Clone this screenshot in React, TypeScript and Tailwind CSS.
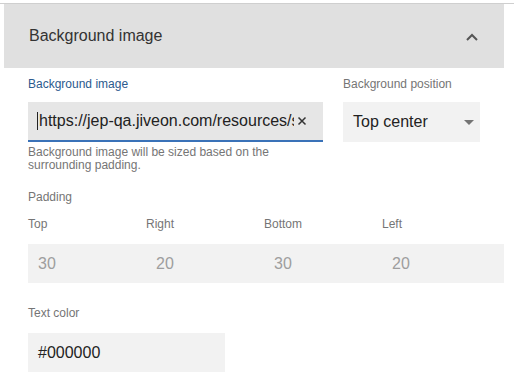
const paddingFields = [
  { label: "Top", value: "30" },
  { label: "Right", value: "20" },
  { label: "Bottom", value: "30" },
  { label: "Left", value: "20" },
]

export default function App() {
  return (
    <div className="w-[514px] h-[386px] bg-white overflow-hidden font-['Liberation_Sans',Arial,sans-serif]">
      <div className="h-[3px]" />
      <div className="h-px bg-[#cfcfcf]" />
      <div className="pl-[4px] pr-[10px]">
        {/* accordion header */}
        <div className="h-[64px] bg-[#e0e0e0] flex items-center justify-between pl-[25px] pr-[26px] pb-[1px]">
          <span className="text-[16px] text-[#333]">Background image</span>
          <svg width="12" height="8" viewBox="0 0 12 8" className="mt-[2px]">
            <polyline points="1,7 6,2 11,7" fill="none" stroke="#555" strokeWidth="2" />
          </svg>
        </div>

        <div className="pl-[24px]">
          <div className="flex gap-[20px] mt-[8px]">
            <div className="w-[295px]">
              <div className="text-[12px] leading-[16px] text-[#2b5a8e]">Background image</div>
              <div className="mt-[10px] h-[40px] bg-[#e6e6e6] border-b-2 border-[#3a72b8] flex items-center pl-[9px] pr-[16px]">
                <span className="w-px h-[18px] bg-[#222] mr-px shrink-0" />
                <div className="flex-1 min-w-0 overflow-hidden whitespace-nowrap text-[16px] text-[#222]">
                  https://jep-qa.jiveon.com/resources/s
                </div>
                <svg width="10" height="10" viewBox="0 0 10 10" className="ml-[3px] shrink-0">
                  <path d="M1.5 1.5 L8.5 8.5 M8.5 1.5 L1.5 8.5" stroke="#333" strokeWidth="1.5" />
                </svg>
              </div>
              <div className="mt-[4px] text-[12px] leading-[13px] text-[#757575]">
                Background image will be sized based on the surrounding padding.
              </div>
            </div>
            <div className="w-[137px]">
              <div className="text-[12px] leading-[16px] text-[#757575]">Background position</div>
              <div className="mt-[10px] h-[40px] bg-[#f2f2f2] flex items-center justify-between pl-[10px] pr-[6px]">
                <span className="text-[16px] text-[#222]">Top center</span>
                <svg width="10" height="5" viewBox="0 0 10 5">
                  <polygon points="0,0 10,0 5,5" fill="#757575" />
                </svg>
              </div>
            </div>
          </div>

          <div className="mt-[17px] text-[12px] leading-[16px] text-[#757575]">Padding</div>
          <div className="mt-[11px] grid grid-cols-[118px_118px_118px_118px]">
            {paddingFields.map((f) => (
              <div key={f.label} className="text-[12px] leading-[16px] text-[#757575]">
                {f.label}
              </div>
            ))}
          </div>
          <div className="mt-[12px] h-[39px] bg-[#f2f2f2] grid grid-cols-[118px_118px_118px_118px] items-center">
            {paddingFields.map((f) => (
              <div key={f.label} className="pl-[10px] text-[16px] text-[#9e9e9e]">
                {f.value}
              </div>
            ))}
          </div>

          <div className="mt-[22px] text-[12px] leading-[16px] text-[#757575]">Text color</div>
          <div className="mt-[12px] w-[197px] h-[39px] bg-[#f2f2f2] flex items-center pl-[10px] text-[16px] text-[#222]">
            #000000
          </div>
        </div>
      </div>
    </div>
  )
}
